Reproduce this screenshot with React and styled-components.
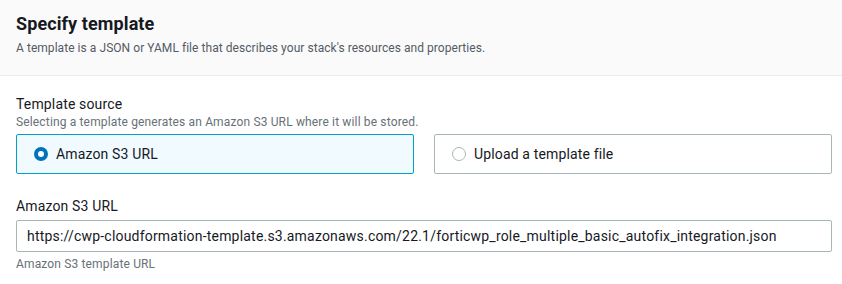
import React from "react";
import styled, { createGlobalStyle } from "styled-components";

const Global = createGlobalStyle`
  html, body { margin: 0; padding: 0; background: #ffffff; }
  body { font-family: Roboto, "Noto Sans", Arial, sans-serif; color: #16191f; }
  * { box-sizing: border-box; }
`;

const Panel = styled.div`
  width: 842px;
  background: #ffffff;
`;

const Header = styled.div`
  background: #fafafa;
  border-bottom: 1px solid #eaeded;
  padding: 12px 16px 0 16px;
  height: 76px;
`;

const Title = styled.h2`
  margin: 0;
  font-size: 18px;
  line-height: 24px;
  font-weight: 700;
  color: #16191f;
  letter-spacing: 0.1px;
`;

const Subtitle = styled.p`
  margin: 4px 0 0 0;
  font-size: 12px;
  line-height: 16px;
  color: #545b64;
  letter-spacing: 0.05px;
`;

const Body = styled.div`
  padding: 18px 10px 0 16px;
  display: flex;
  flex-direction: column;
`;

const Field = styled.div`
  display: flex;
  flex-direction: column;
  margin-bottom: ${(p) => p.$mb || 0}px;
`;

const Label = styled.div`
  font-size: 14px;
  line-height: 20px;
  color: #16191f;
  letter-spacing: 0.15px;
`;

const Description = styled.div`
  font-size: 12px;
  line-height: 16px;
  color: #687078;
  letter-spacing: 0.15px;
  margin-bottom: ${(p) => p.$mb || 0}px;
  margin-top: ${(p) => p.$mt || 0}px;
`;

const Tiles = styled.div`
  display: grid;
  grid-template-columns: 398px 398px;
  column-gap: 20px;
`;

const Tile = styled.label`
  height: 40px;
  display: flex;
  align-items: center;
  gap: 8px;
  padding-left: 17px;
  border: 1px solid ${(p) => (p.$selected ? "#00a1c9" : "#aab7b8")};
  background: ${(p) => (p.$selected ? "#f1faff" : "#ffffff")};
  border-radius: 2px;
  font-size: 14px;
  letter-spacing: 0.15px;
  color: #16191f;
  cursor: pointer;
`;

const Radio = styled.span`
  width: 14px;
  height: 14px;
  border-radius: 50%;
  flex: none;
  border: ${(p) => (p.$checked ? "4px solid #0073bb" : "1px solid #aab7b8")};
  background: #ffffff;
`;

const Input = styled.div`
  height: 32px;
  border: 1px solid #aab7b8;
  border-radius: 2px;
  padding-left: 10px;
  display: flex;
  align-items: center;
  font-size: 14px;
  letter-spacing: 0.2px;
  color: #16191f;
  margin-top: 4px;
  white-space: nowrap;
  overflow: hidden;
`;

export default function App() {
  return (
    <Panel>
      <Global />
      <Header>
        <Title>Specify template</Title>
        <Subtitle>
          A template is a JSON or YAML file that describes your stack's resources and properties.
        </Subtitle>
      </Header>
      <Body>
        <Field $mb={22}>
          <Label>Template source</Label>
          <Description $mb={4}>
            Selecting a template generates an Amazon S3 URL where it will be stored.
          </Description>
          <Tiles>
            <Tile $selected>
              <Radio $checked />
              Amazon S3 URL
            </Tile>
            <Tile>
              <Radio />
              Upload a template file
            </Tile>
          </Tiles>
        </Field>
        <Field>
          <Label>Amazon S3 URL</Label>
          <Input>
            https://cwp-cloudformation-template.s3.amazonaws.com/22.1/forticwp_role_multiple_basic_autofix_integration.json
          </Input>
          <Description $mt={4}>Amazon S3 template URL</Description>
        </Field>
      </Body>
    </Panel>
  );
}
